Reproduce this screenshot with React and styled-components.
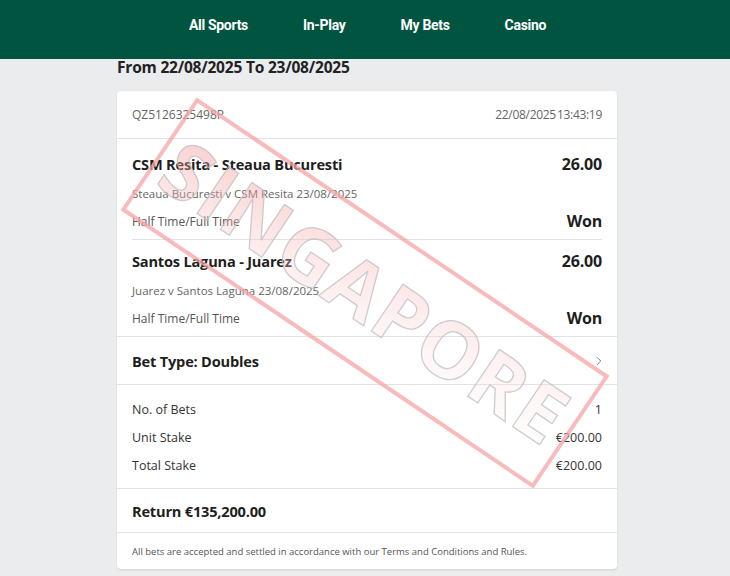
import styled, { createGlobalStyle } from 'styled-components';
import { ChevronRight } from 'lucide-react';

const Global = createGlobalStyle`
  html, body {
    margin: 0;
    padding: 0;
    background: #ebecee;
    font-family: "Open Sans", "Noto Sans", sans-serif;
    color: #222;
  }
`;

const TopBar = styled.header`
  height: 59px;
  background: #005440;
  display: flex;
  justify-content: center;
  gap: 55px;
  padding: 16px 0 0 5px;
  box-sizing: border-box;
`;

const NavItem = styled.a`
  color: #fff;
  font-family: Roboto, "Open Sans", sans-serif;
  font-weight: 700;
  font-size: 14px;
  letter-spacing: -0.3px;
  line-height: 18px;
  text-decoration: none;
`;

const Page = styled.main`
  display: flex;
  justify-content: center;
  padding: 0 0 20px 4px;
`;

const Column = styled.div`
  width: 500px;
`;

const RangeTitle = styled.h2`
  margin: 0;
  height: 32px;
  font-size: 15.5px;
  font-weight: 700;
  line-height: 16px;
  letter-spacing: -0.2px;
  color: #222;
`;

const Card = styled.section`
  position: relative;
  background: #fff;
  border-radius: 4px;
  box-shadow: 0 1px 2px rgba(0, 0, 0, 0.12);
  overflow: hidden;
`;

const Section = styled.div`
  display: flex;
  flex-direction: column;
  padding: ${p => p.$pad || '0 15px'};
  border-bottom: ${p => (p.$last ? 'none' : '1px solid #e2e2e2')};
`;

const Row = styled.div`
  display: flex;
  justify-content: space-between;
  align-items: center;
  height: ${p => p.$h || 'auto'};
`;

const RefText = styled.span`
  font-size: 12px;
  color: #666;
`;

const Stamp = styled.span`
  display: flex;
  gap: 1px;
  font-size: 12px;
  letter-spacing: -0.3px;
  color: #666;
`;

const Leg = styled.div`
  margin: 0 15px;
  padding: ${p => p.$top}px 0 7px;
  & + & {
    border-top: 1px solid #e2e2e2;
  }
`;

const Strong = styled.span`
  font-weight: 700;
  font-size: ${p => p.$size || '14.6px'};
  color: #1e1e1e;
  letter-spacing: -0.2px;
`;

const Sub = styled.div`
  font-size: 11.5px;
  color: #666;
  line-height: 20px;
  margin: 9px 0 0;
`;

const Plain = styled.span`
  font-size: ${p => p.$size || '12px'};
  color: ${p => p.$color || '#555'};
`;

const Chevron = styled(ChevronRight)`
  color: #555;
  margin-right: -4px;
`;

const Footer = styled.div`
  height: 36px;
  display: flex;
  align-items: center;
  padding: 0 15px;
  font-size: 9.5px;
  color: #555;
`;

const Mark = styled.svg`
  position: absolute;
  inset: 0;
  width: 100%;
  height: 100%;
  pointer-events: none;
`;

function Watermark() {
  return (
    <Mark viewBox="0 0 500 478">
      <defs>
        <linearGradient id="wmFill" x1="0" y1="0" x2="1" y2="1">
          <stop offset="0" stopColor="#f27d7d" stopOpacity="0.45" />
          <stop offset="0.6" stopColor="#fbd4d4" stopOpacity="0.3" />
          <stop offset="1" stopColor="#ffffff" stopOpacity="0.2" />
        </linearGradient>
      </defs>
      <g transform="translate(248 202) rotate(34)">
        <rect x="-247" y="-66" width="494" height="132" fill="none" stroke="#f6a3a3" strokeOpacity="0.75" strokeWidth="4" />
        <text
          x="0"
          y="28"
          textAnchor="middle"
          fontFamily="'Open Sans', sans-serif"
          fontWeight="700"
          fontSize="79"
          letterSpacing="2"
          fill="url(#wmFill)"
          stroke="#bdbdbd"
          strokeOpacity="0.75"
          strokeWidth="1.3"
        >
          SINGAPORE
        </text>
      </g>
    </Mark>
  );
}

const legs = [
  { name: 'CSM Resita - Steaua Bucuresti', event: 'Steaua Bucuresti v CSM Resita 23/08/2025', odds: '26.00', top: 14 },
  { name: 'Santos Laguna - Juarez', event: 'Juarez v Santos Laguna 23/08/2025', odds: '26.00', top: 10 },
];

const stakes = [
  ['No. of Bets', '1'],
  ['Unit Stake', '€200.00'],
  ['Total Stake', '€200.00'],
];

export default function App() {
  return (
    <>
      <Global />
      <TopBar>
        <NavItem href="#">All Sports</NavItem>
        <NavItem href="#">In-Play</NavItem>
        <NavItem href="#">My Bets</NavItem>
        <NavItem href="#">Casino</NavItem>
      </TopBar>
      <Page>
        <Column>
          <RangeTitle>From 22/08/2025 To 23/08/2025</RangeTitle>
          <Card>
            <Section>
              <Row $h="47px">
                <RefText>QZ5126325498P</RefText>
                <Stamp><span>22/08/2025</span><span>13:43:19</span></Stamp>
              </Row>
            </Section>
            <Section $pad="0">
              {legs.map(l => (
                <Leg key={l.name} $top={l.top}>
                  <Row $h="22px">
                    <Strong>{l.name}</Strong>
                    <Strong $size="16px">{l.odds}</Strong>
                  </Row>
                  <Sub>{l.event}</Sub>
                  <Row $h="22px" style={{ marginTop: 6 }}>
                    <Plain>Half Time/Full Time</Plain>
                    <Strong $size="16px">Won</Strong>
                  </Row>
                </Leg>
              ))}
            </Section>
            <Section>
              <Row $h="47px">
                <Strong>Bet Type: Doubles</Strong>
                <Chevron size={14} strokeWidth={1.3} />
              </Row>
            </Section>
            <Section $pad="10px 15px 9px">
              {stakes.map(([k, v]) => (
                <Row key={k} $h="28px">
                  <Plain $size="12.5px" $color="#333">{k}</Plain>
                  <Plain $size="12.5px" $color="#333">{v}</Plain>
                </Row>
              ))}
            </Section>
            <Section>
              <Row $h="43px">
                <Strong>Return €135,200.00</Strong>
              </Row>
            </Section>
            <Footer>All bets are accepted and settled in accordance with our Terms and Conditions and Rules.</Footer>
            <Watermark />
          </Card>
        </Column>
      </Page>
    </>
  );
}
